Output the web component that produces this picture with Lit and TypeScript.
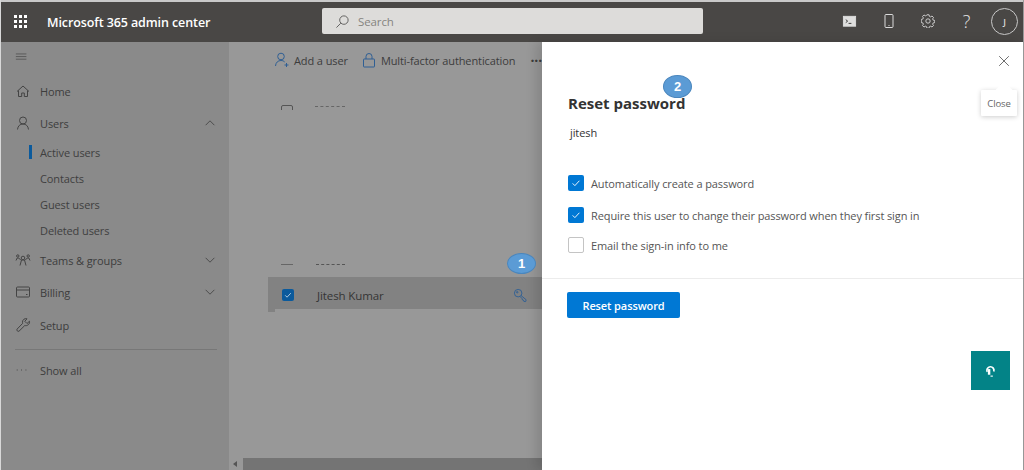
import { LitElement, html, css, svg } from "lit";
import { customElement } from "lit/decorators.js";

const icon = (body: unknown, size = 16, cls = "") => html`<svg class=${cls} width=${size} height=${size} viewBox="0 0 16 16" fill="none" stroke="currentColor" stroke-width="1">${body}</svg>`;

const chevUp = icon(svg`<path d="M3 10.5 8 5.5l5 5"/>`, 14);
const chevDown = icon(svg`<path d="M3 5.5l5 5 5-5"/>`, 14);

@customElement("app-root")
export class AppRoot extends LitElement {
  static styles = css`
    :host { display: block; width: 1024px; height: 470px; overflow: hidden; position: relative; background: #fff;
      font-family: "Open Sans", "Noto Sans", sans-serif; font-size: 11px; letter-spacing: -0.1px; }
    .page { display: flex; flex-direction: column; height: 470px; border-left: 1px solid #d8d8d8; border-right: 1px solid #999; box-sizing: border-box; }
    .top { height: 42px; flex: none; background: #494745; border-top: 2px solid #c9c9c9; box-sizing: border-box; display: flex; align-items: center; color: #fff; }
    .waffle { width: 13px; height: 13px; margin: 0 0 2px 13px; display: grid; grid-template-columns: repeat(3, 3px); gap: 2px; }
    .waffle i { background: #fff; width: 3px; height: 3px; display: block; }
    .brand { margin-left: 20px; width: 275px; font-size: 12.5px; font-weight: 600; letter-spacing: -0.1px; white-space: nowrap; }
    .search { width: 381px; height: 26px; margin-bottom: 2px; background: #dddcda; border-radius: 2px; display: flex; align-items: center; gap: 8px; padding-left: 13px; box-sizing: border-box; color: #5d5c5b; font-size: 11.5px; }
    .search span { color: #85847f; }
    .tools { margin: 0 0 2px auto; display: flex; align-items: center; color: #dcdcdc; padding-right: 5px; }
    .tool { width: 39px; display: flex; justify-content: center; align-items: center; }
    .q { font-size: 18px; line-height: 16px; color: #e6e6e6; font-weight: 300; }
    .avatar { width: 27px; height: 27px; box-sizing: border-box; border: 1px solid #c8c8c8; border-radius: 50%; display: flex; align-items: center; justify-content: center; font-size: 9px; font-weight: 600; margin-left: 5px; }

    .body { flex: 1; display: flex; min-height: 0; }
    .side { width: 228px; flex: none; background: #8a8a8a; color: #3f3f3f; padding-top: 8px; box-sizing: border-box; }
    .ham { height: 14px; margin-left: 14px; color: #555; display: flex; align-items: center; }
    .nav { margin-top: 11px; display: flex; flex-direction: column; }
    .item { display: flex; align-items: center; height: 32px; padding: 0 12px 0 14px; color: #3d3d3d; }
    .item .ico { width: 25px; display: flex; color: #444; }
    .item .ch { margin-left: auto; display: flex; color: #444; }
    .sub { display: flex; flex-direction: column; margin-bottom: 1px; }
    .subi { height: 26px; padding-left: 39px; display: flex; align-items: center; position: relative; }
    .subi.active::before { content: ""; position: absolute; left: 28px; top: 6px; width: 3px; height: 14px; background: #0b5a9c; }
    .setup { margin-top: 1px; }
    .sep { height: 1px; background: #777; margin: 8px 12px 0 14px; }
    .more { margin-top: 4px; }

    .main { flex: 1; background: #989898; display: flex; flex-direction: column; position: relative; min-width: 0; color: #3c3c3c; }
    .bar { display: flex; align-items: center; height: 36px; padding-left: 45px; gap: 13px; white-space: nowrap; }
    .cmd { display: flex; align-items: center; gap: 4px; }
    .cmd svg { color: #2f5f94; }
    .dots { font-size: 14px; font-weight: 700; margin-left: 2px; }
    .stub { margin: 27px 0 0 52px; height: 5px; overflow: hidden; display: flex; gap: 22px; }
    .stub b { width: 12px; height: 12px; border: 1px solid #555; border-radius: 2px; box-sizing: border-box; display: block; }
    .stub i { width: 30px; height: 0; margin-top: 1px; border-top: 1px dashed #666; }
    .list { margin-top: 154px; }
    .stub2 { margin: 0 0 0 52px; height: 6px; display: flex; gap: 23px; }
    .stub2 b { width: 12px; height: 1px; background: #666; display: block; }
    .stub2 i { width: 29px; height: 0; border-top: 1px dashed #555; }
    .row { margin: 7px 0 0 39px; height: 32px; box-sizing: border-box; padding: 4px 0 0 14px; background: #828282; display: flex; align-items: center; color: #353535; font-weight: 500; position: relative; }
    .row::after { content: ""; position: absolute; left: 0; top: 32px; width: 7px; height: 3px; background: #828282; }
    .cb { width: 12px; height: 12px; border-radius: 2px; background: #0b5a9c; color: #cfe0ee; display: flex; align-items: center; justify-content: center; flex: none; }
    .row span { margin-left: 23px; font-size: 11.5px; }
    .key { margin-left: auto; margin-right: 14px; color: #2f5f94; display: flex; }
    .lines { flex: 1; }
    .scroll { height: 12px; flex: none; background: #747474; margin-left: 14px; position: relative; }
    .scroll::before { content: ""; position: absolute; left: -10px; top: 3px; border: 3px solid transparent; border-right: 4px solid #555; border-left: 0; }

    .panel { width: 481px; flex: none; background: #fff; box-shadow: -6px 0 10px rgba(0,0,0,.12); position: relative; color: #3b3a39; box-sizing: border-box; display: flex; flex-direction: column; }
    .x { display: flex; justify-content: flex-end; padding: 12px 12px 0 0; color: #5a5a5a; height: 16px; }
    .h1 { margin: 22px 0 0 26px; font-size: 15px; font-weight: 700; color: #333; line-height: 22px; letter-spacing: 0; }
    .who { margin: 11px 0 0 28px; font-weight: 500; color: #333; line-height: 16px; }
    .opts { margin: 34px 0 0 26px; display: flex; flex-direction: column; }
    .opt { display: flex; align-items: center; gap: 7px; color: #555; height: 16px; white-space: nowrap; }
    .opt .box { width: 16px; height: 16px; border-radius: 2px; background: #0078d4; color: #fff; display: flex; align-items: center; justify-content: center; flex: none; }
    .opt .box.off { background: #fff; box-sizing: border-box; border: 1px solid #c4c4c4; }
    .opt.o2 { margin-top: 16px; } .opt.o3 { margin-top: 14px; }
    .rule { height: 1px; background: #ececec; margin-top: 25px; }
    .btn { margin: 13px 0 0 25px; width: 113px; height: 26px; background: #0078d4; color: #fff; border: 0; border-radius: 2px; font: 600 11px "Open Sans", sans-serif; letter-spacing: -0.1px; display: flex; align-items: center; justify-content: center; }
    .tip { position: absolute; right: 6px; top: 48px; width: 36px; height: 26px; background: #fff; box-shadow: 0 1px 5px rgba(0,0,0,.2); color: #666; font-size: 9.5px; display: flex; align-items: center; justify-content: center; border-radius: 1px; }
    .tip::before { content: ""; position: absolute; top: -6px; left: 17px; width: 12px; height: 12px; background: #fff; transform: rotate(45deg); }
    .tip span { position: relative; }
    .badge { position: absolute; width: 29px; height: 21px; border-radius: 50%; background: #5b9bd5; border: 1px solid #4a86bd; box-sizing: border-box; color: #fff; font-weight: 700; font-size: 13px; display: flex; align-items: center; justify-content: center; font-family: "Liberation Sans", sans-serif; }
    .b1 { left: 507px; top: 253px; }
    .b2 { left: 663px; top: 75px; height: 23px; }
    .chat { position: absolute; left: 971px; top: 351px; width: 39px; height: 39px; background: #038387; color: #fff; display: flex; align-items: center; justify-content: center; }
  `;

  render() {
    return html`
      <div class="page">
        <header class="top">
          <div class="waffle">${Array.from({ length: 9 }, () => html`<i></i>`)}</div>
          <div class="brand">Microsoft 365 admin center</div>
          <div class="search">
            ${icon(svg`<circle cx="9.500" cy="6.500" r="4.500"/><path d="M6.200 9.800 1.500 14.500"/>`, 15)}
            <span>Search</span>
          </div>
          <div class="tools">
            <div class="tool">${icon(svg`<rect x="1.500" y="2.500" width="13" height="10.500" fill="#f0efee" fill-opacity=".9"/><path d="M4 6l2 1.600L4 9.200M7 10h3" stroke="#333"/>`, 15)}</div>
            <div class="tool">${icon(svg`<rect x="4" y="1.500" width="8" height="13" rx="1"/><path d="M7.500 12.500h1"/>`, 16)}</div>
            <div class="tool">${icon(svg`<circle cx="8" cy="8" r="2.500"/><path d="M6.800 1.500h2.400l.4 1.800 1.400.6 1.600-1 1.700 1.700-1 1.600.6 1.400 1.800.4v2.400l-1.800.4-.6 1.400 1 1.600-1.700 1.700-1.600-1-1.400.6-.4 1.800H6.800l-.4-1.800-1.400-.6-1.600 1-1.700-1.700 1-1.600-.6-1.400-1.800-.4V6.800l1.800-.4.6-1.400-1-1.600 1.700-1.700 1.600 1 1.400-.6z" transform="translate(0 -.6)"/>`, 14)}</div>
            <div class="tool q">?</div>
            <div class="avatar">J</div>
          </div>
        </header>
        <div class="body">
          <aside class="side">
            <div class="ham">${icon(svg`<path d="M1 4.500h12M1 7.500h12M1 10.500h12" stroke="#555"/>`, 14)}</div>
            <nav class="nav">
              <div class="item"><span class="ico">${icon(svg`<path d="M2 8.500 8 3l6 5.500M3.500 7.500v6h3.200v-3.500h2.600v3.500h3.200v-6"/>`)}</span>Home</div>
              <div class="item"><span class="ico">${icon(svg`<circle cx="8" cy="5.500" r="3.500"/><path d="M2.500 14.500c.3-3.500 2.500-5.500 5.500-5.500s5.200 2 5.500 5.500"/>`)}</span>Users<span class="ch">${chevUp}</span></div>
              <div class="sub">
                <div class="subi active">Active users</div>
                <div class="subi">Contacts</div>
                <div class="subi">Guest users</div>
                <div class="subi">Deleted users</div>
              </div>
              <div class="item"><span class="ico">${icon(svg`<circle cx="8" cy="6" r="1.800"/><path d="M5 13.500 6.500 8h3l1.500 5.500"/><circle cx="2.800" cy="4" r="1.200"/><circle cx="13.200" cy="4" r="1.200"/><path d="M1 8.500 2.200 6h1.500l2 2M15 8.500 13.800 6h-1.500l-2 2"/>`)}</span>Teams &amp; groups<span class="ch">${chevDown}</span></div>
              <div class="item"><span class="ico">${icon(svg`<rect x="1.500" y="3" width="13" height="10" rx="1"/><path d="M1.500 6h13M11 10.500h1.500"/>`)}</span>Billing<span class="ch">${chevDown}</span></div>
              <div class="item setup"><span class="ico">${icon(svg`<path d="M14.500 4.200 12 6.500 9.800 4.300 12 1.800c-2.200-.8-4.500.8-4.500 3.200 0 .5.100 1 .2 1.300L2 12.200a1.500 1.500 0 0 0 2 2l5.800-5.700c2.500.8 5.300-1.500 4.700-4.300z"/>`)}</span>Setup</div>
              <div class="sep"></div>
              <div class="item more"><span class="ico">${icon(svg`<path d="M2 8h1M7 8h1M12 8h1" stroke-width="1.300"/>`, 14)}</span>Show all</div>
            </nav>
          </aside>
          <main class="main">
            <div class="bar">
              <div class="cmd">${icon(svg`<circle cx="7" cy="4.500" r="3.300"/><path d="M1.500 14c.2-3.500 2.500-5.500 5.500-5.500 1.500 0 2.800.5 3.700 1.500M12.500 11v4M10.500 13h4"/>`)}<span>Add a user</span></div>
              <div class="cmd">${icon(svg`<rect x="2.500" y="7" width="11" height="8" rx=".5"/><path d="M5 7V4.500a3 3 0 0 1 6 0V7"/>`)}<span>Multi-factor authentication</span></div>
              <div class="cmd"><span class="dots">···</span></div>
            </div>
            <div class="stub"><b></b><i></i></div>
            <div class="list">
              <div class="stub2"><b></b><i></i></div>
              <div class="row">
                <div class="cb">${icon(svg`<path d="M3.500 8.500 6.500 11.500 12.500 5" stroke-width="1.300"/>`, 10)}</div>
                <span>Jitesh Kumar</span>
                <div class="key">${icon(svg`<circle cx="5.500" cy="5.500" r="4"/><path d="M8.500 8 14 12.500l-.5 2-2-.3-.3-1.200-1.200-.3-.2-1.200L8 9.500"/><circle cx="4.500" cy="4.500" r=".8"/>`, 15)}</div>
              </div>
            </div>
            <div class="lines"></div>
            <div class="scroll"></div>
          </main>
          <section class="panel">
            <div class="x">${icon(svg`<path d="M2.500 2.500l11 11M13.500 2.500l-11 11"/>`, 14)}</div>
            <div class="h1">Reset password</div>
            <div class="who">jitesh</div>
            <div class="opts">
              <label class="opt"><span class="box">${icon(svg`<path d="M3.500 8.500 6.500 11.500 12.500 5" stroke-width="1.200"/>`, 12)}</span>Automatically create a password</label>
              <label class="opt o2"><span class="box">${icon(svg`<path d="M3.500 8.500 6.500 11.500 12.500 5" stroke-width="1.200"/>`, 12)}</span>Require this user to change their password when they first sign in</label>
              <label class="opt o3"><span class="box off"></span>Email the sign-in info to me</label>
            </div>
            <div class="rule"></div>
            <button class="btn">Reset password</button>
            <div class="tip"><span>Close</span></div>
          </section>
        </div>
      </div>
      <div class="badge b1">1</div>
      <div class="badge b2">2</div>
      <div class="chat">${icon(svg`<path d="M4.500 9.500A3.800 3.800 0 1 1 11.500 9" stroke-width="1.800"/><path d="M6.500 6.500V12.500" stroke-width="2.600"/><path d="M8 14h2.500" stroke-width="1.200"/>`, 15)}</div>
    `;
  }
}
